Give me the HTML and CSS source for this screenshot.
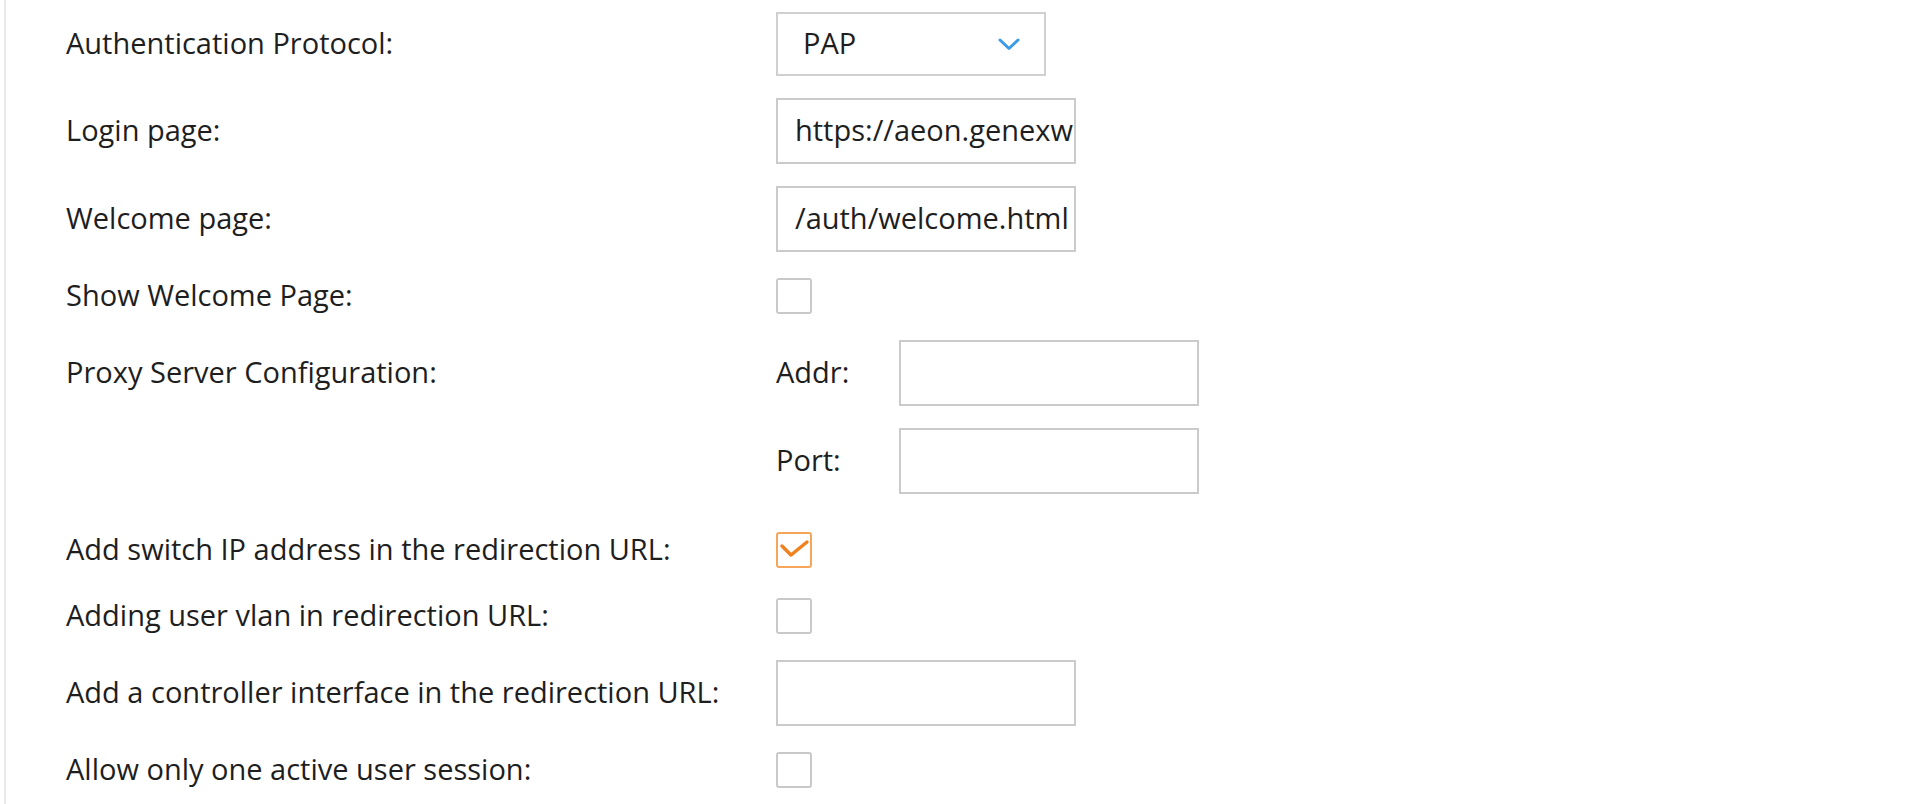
FILE: index.html
```html
<!DOCTYPE html>
<html lang="en">
<head>
<meta charset="utf-8">
<title>Captive Portal Settings</title>
<link rel="stylesheet" href="styles.css">
</head>
<body>
<div class="page">
  <div class="form">
    <div class="row">
      <div class="label">Authentication Protocol:</div>
      <div class="select">
        <span class="select-value">PAP</span>
        <svg class="chevron" width="22" height="13" viewBox="0 0 22 13"><polyline points="2,2 11,10.5 20,2" fill="none" stroke="#3a9ae8" stroke-width="3" stroke-linecap="round" stroke-linejoin="round"/></svg>
      </div>
    </div>
    <div class="row">
      <div class="label">Login page:</div>
      <input class="text-input" type="text" value="https://aeon.genexwireless.com/auth/login.html">
    </div>
    <div class="row">
      <div class="label">Welcome page:</div>
      <input class="text-input" type="text" value="/auth/welcome.html">
    </div>
    <div class="row row-check">
      <div class="label">Show Welcome Page:</div>
      <span class="checkbox"></span>
    </div>
    <div class="row row-proxy">
      <div class="label label-proxy">Proxy Server Configuration:</div>
      <div class="proxy">
        <div class="sub-row">
          <div class="sub-label">Addr:</div>
          <input class="text-input" type="text" value="">
        </div>
        <div class="sub-row">
          <div class="sub-label">Port:</div>
          <input class="text-input" type="text" value="">
        </div>
      </div>
    </div>
    <div class="row row-check">
      <div class="label">Add switch IP address in the redirection URL:</div>
      <span class="checkbox checked">
        <svg width="36" height="36" viewBox="0 0 36 36"><polyline points="6,14 15,23 31,10" fill="none" stroke="#f0811f" stroke-width="3.5" stroke-linecap="round" stroke-linejoin="round"/></svg>
      </span>
    </div>
    <div class="row row-check">
      <div class="label">Adding user vlan in redirection URL:</div>
      <span class="checkbox"></span>
    </div>
    <div class="row">
      <div class="label">Add a controller interface in the redirection URL:</div>
      <input class="text-input" type="text" value="">
    </div>
    <div class="row row-check">
      <div class="label">Allow only one active user session:</div>
      <span class="checkbox"></span>
    </div>
  </div>
</div>
</body>
</html>
```
FILE: styles.css
```css
html, body {
  margin: 0;
  padding: 0;
  background: #ffffff;
}

body {
  font-family: "Open Sans", "Noto Sans", sans-serif;
  font-size: 29px;
  color: #1e1e1e;
}

.page {
  margin-left: 4px;
  border-left: 2px solid #e9e9e9;
  min-height: 804px;
  box-sizing: border-box;
  padding-left: 60px;
  padding-top: 12px;
}

.form {
  display: flex;
  flex-direction: column;
  gap: 22px;
}

.row {
  display: flex;
  align-items: center;
}

.row-check {
  min-height: 44px;
}

.row-proxy {
  align-items: flex-start;
  margin-bottom: 12px;
}

.label {
  width: 710px;
  flex-shrink: 0;
  white-space: nowrap;
  padding-bottom: 4px;
}

.label-proxy {
  height: 66px;
  box-sizing: border-box;
  display: flex;
  align-items: center;
}

.select {
  width: 270px;
  height: 64px;
  box-sizing: border-box;
  border: 2px solid #d0d0d0;
  display: flex;
  align-items: center;
  justify-content: space-between;
  padding: 0 24px 0 25px;
}

.select-value {
  padding-bottom: 4px;
}

.chevron {
  display: block;
}

.text-input {
  width: 300px;
  height: 66px;
  box-sizing: border-box;
  border: 2px solid #cbcbcb;
  border-radius: 0;
  padding: 0 1px 4px 17px;
  margin: 0;
  font-family: "Open Sans", "Noto Sans", sans-serif;
  font-size: 29px;
  color: #1e1e1e;
  background: #ffffff;
  outline: none;
}

.checkbox {
  display: block;
  width: 36px;
  height: 36px;
  box-sizing: border-box;
  border: 2px solid #c9c9c9;
  border-radius: 3px;
  position: relative;
}

.checkbox.checked {
  border-color: #f6a65a;
}

.checkbox.checked svg {
  position: absolute;
  left: -2px;
  top: -2px;
}

.proxy {
  display: flex;
  flex-direction: column;
  gap: 22px;
}

.sub-row {
  display: flex;
  align-items: center;
}

.sub-label {
  width: 123px;
  flex-shrink: 0;
  padding-bottom: 4px;
}
```
